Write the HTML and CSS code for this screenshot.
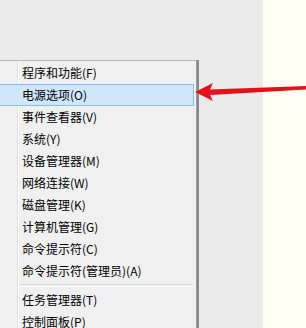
FILE: index.html
```html
<!DOCTYPE html>
<html lang="zh-CN">
<head>
    <meta charset="UTF-8">
    <meta name="viewport" content="width=device-width, initial-scale=1.0">
    <title>Win+X 菜单</title>
    <link rel="stylesheet" href="styles.css">
</head>
<body>
    <div class="screen">
        <div class="desktop">
            <ul class="menu">
                <li class="item">程序和功能(F)</li>
                <li class="item active">电源选项(O)</li>
                <li class="item">事件查看器(V)</li>
                <li class="item">系统(Y)</li>
                <li class="item">设备管理器(M)</li>
                <li class="item">网络连接(W)</li>
                <li class="item">磁盘管理(K)</li>
                <li class="item">计算机管理(G)</li>
                <li class="item">命令提示符(C)</li>
                <li class="item">命令提示符(管理员)(A)</li>
                <li class="sep"></li>
                <li class="item">任务管理器(T)</li>
                <li class="item">控制面板(P)</li>
            </ul>
        </div>
        <div class="page"></div>

        <!-- red arrow pointing at the power options item -->
        <svg class="arrow" width="112" height="20" viewBox="0 0 112 20">
            <polygon points="0,10 18,1 15,7.5 112,4 112,7.5 15,13 18,19" fill="#e5101a"/>
        </svg>
    </div>
</body>
</html>
```

FILE: styles.css
```css
body {
    margin: 0;
    padding: 0;
    font-family: "Noto Sans CJK SC", "Liberation Sans", sans-serif;
}

.screen {
    position: relative;
    display: flex;
    width: 306px;
    height: 328px;
    overflow: hidden;
}

.desktop {
    width: 263px;
    background-color: #ebebeb;
    padding-top: 60px;
    box-sizing: border-box;
}

.page {
    flex: 1;
    background-color: #fffff4;
}

.menu {
    list-style: none;
    margin: 0;
    padding: 1px 0 0 0;
    width: 196px;
    height: 300px;
    background-color: #f0f0f0;
    border-top: 1px solid #b9b9b9;
    border-right: 1px solid #9a9a9a;
    box-shadow: 2px 0 0 #888888;
    background-image: linear-gradient(to right, transparent 17px, #e2e2e2 17px, #e2e2e2 18px, #ffffff 18px, #ffffff 19px, transparent 19px);
}

.item {
    height: 22px;
    line-height: 22px;
    padding-left: 22px;
    margin-right: 2px;
    font-size: 12px;
    color: #000;
    white-space: nowrap;
    box-sizing: border-box;
}

.item.active {
    background-color: #d1e6f9;
    border: 1px solid #84bdee;
    border-left: none;
    line-height: 20px;
}

.sep {
    height: 1px;
    margin: 2px 3px 2px 19px;
    border-top: 1px solid #d8d8d8;
    border-bottom: 1px solid #ffffff;
}

.arrow {
    position: absolute;
    left: 195px;
    top: 82px;
}
```
